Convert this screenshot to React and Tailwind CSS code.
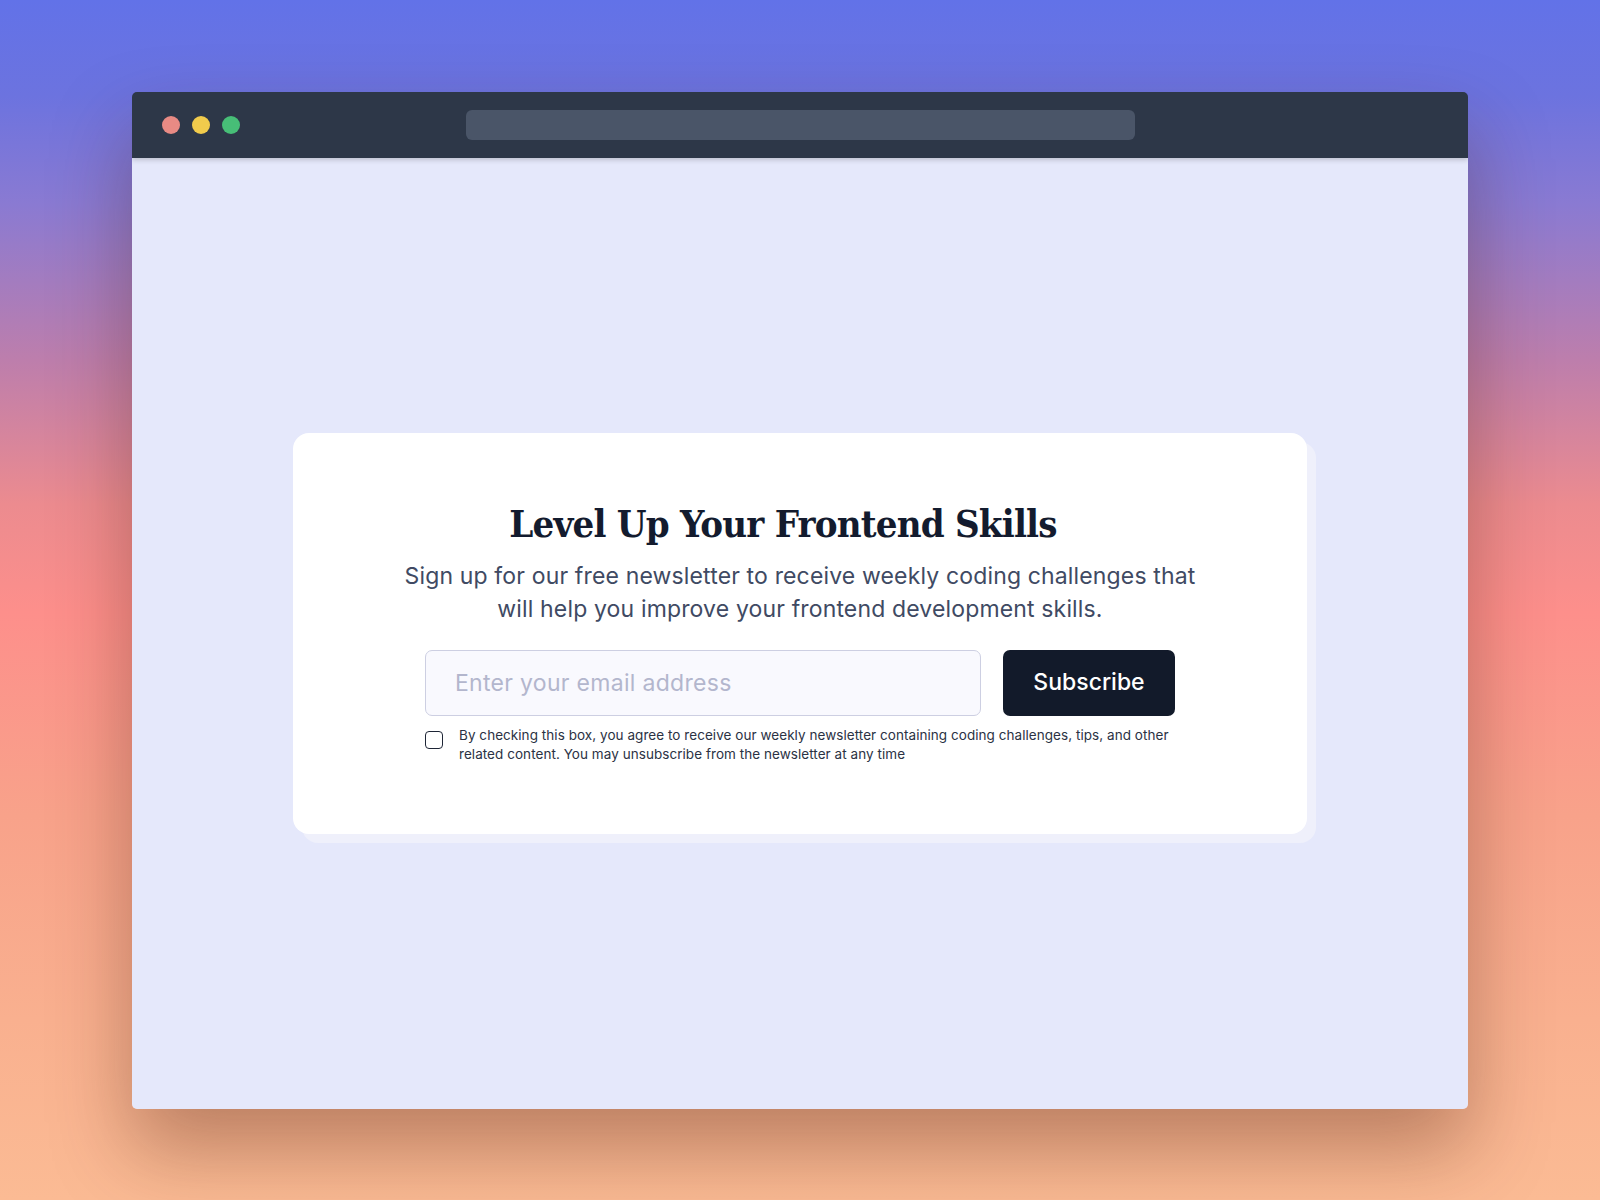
import { useState } from "react";

const App = () => {
  const [email, setEmail] = useState("");
  const [agreed, setAgreed] = useState(false);

  return (
    <div className="min-h-screen w-full flex items-center justify-center font-['Inter',sans-serif] bg-[linear-gradient(180deg,#6272e8_0%,#6c73df_8%,#8a7ad2_17%,#bd7eac_30%,#ec8b8f_42%,#fd8f8b_51%,#f8a28a_68%,#f9b08f_85%,#fbbb94_100%)]">
      {/* Browser window */}
      <div className="w-[1336px] h-[1017px] rounded-[5px] overflow-hidden flex flex-col shadow-[0_40px_80px_0_rgba(70,25,10,0.35)]">
        {/* Title bar */}
        <div className="relative z-10 h-[66px] shrink-0 bg-[#2d3748] grid grid-cols-[1fr_669px_1fr] items-center px-[30px] shadow-[0_2px_5px_rgba(0,0,0,0.18)]">
          <div className="flex items-center gap-[12px]">
            <span className="w-[18px] h-[18px] rounded-full bg-[#e88a84]"></span>
            <span className="w-[18px] h-[18px] rounded-full bg-[#f1cb4c]"></span>
            <span className="w-[18px] h-[18px] rounded-full bg-[#47be77]"></span>
          </div>
          <div className="h-[30px] rounded-[6px] bg-[#4a5568]"></div>
          <div></div>
        </div>

        {/* Page */}
        <div className="flex-1 bg-[#e5e8fb] flex items-center justify-center">
          <div className="w-[1014px] h-[401px] bg-white rounded-[16px] shadow-[9px_9px_0_0_#eff0fb] flex flex-col items-center pt-[67px]">
            <h1 className="pr-[34px] font-['DejaVu_Serif_Condensed','DejaVu_Serif',serif] font-bold text-[38px] leading-[48px] tracking-[-0.8px] text-[#131b2e]">
              Level Up Your Frontend Skills
            </h1>
            <p className="mt-[12px] text-center text-[23px] leading-[33px] tracking-[0.15px] text-[#404a63]">
              Sign up for our free newsletter to receive weekly coding challenges that
              <br />
              will help you improve your frontend development skills.
            </p>

            <form
              className="mt-[24px] flex gap-[22px]"
              onSubmit={(e) => e.preventDefault()}
            >
              <input
                type="email"
                value={email}
                onChange={(e) => setEmail(e.target.value)}
                placeholder="Enter your email address"
                className="w-[556px] h-[66px] rounded-[7px] border border-[#cdcfe2] bg-[#f9f9fe] px-[29px] text-[23px] tracking-[0.3px] text-[#1f2937] outline-none placeholder:text-[#b3b6cd]"
              />
              <button
                type="submit"
                className="w-[172px] h-[66px] rounded-[7px] bg-[#121a2a] text-white text-[23px] font-medium"
              >
                Subscribe
              </button>
            </form>

            <label className="mt-[10px] w-[750px] flex items-start gap-[16px] cursor-pointer">
              <input
                type="checkbox"
                checked={agreed}
                onChange={() => setAgreed(!agreed)}
                className="appearance-none mt-[5px] w-[18px] h-[18px] shrink-0 rounded-[4px] border-[1.5px] border-[#1e2536] bg-white checked:bg-[#121a2a]"
              />
              <span className="text-[13.5px] leading-[19px] tracking-[0.05px] text-[#2b3244]">
                By checking this box, you agree to receive our weekly newsletter containing coding challenges, tips, and other
                <br />
                related content. You may unsubscribe from the newsletter at any time
              </span>
            </label>
          </div>
        </div>
      </div>
    </div>
  );
};

export default App;
